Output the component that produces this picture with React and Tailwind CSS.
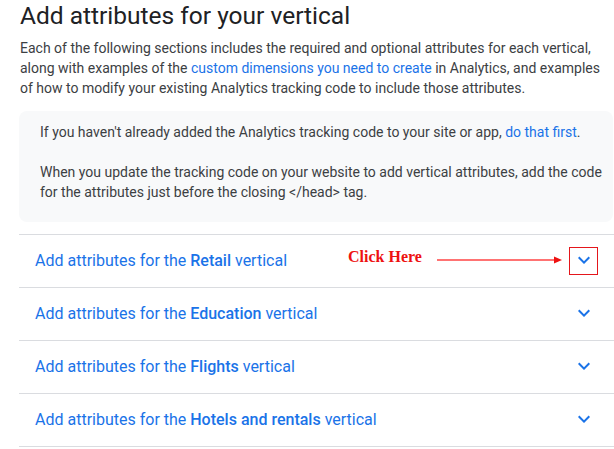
import React from "react";

function Chevron() {
  return (
    <svg width="24" height="24" viewBox="0 0 24 24" fill="#1a73e8">
      <path d="M16.59 8.59L12 13.17 7.41 8.59 6 10l6 6 6-6z" />
    </svg>
  );
}

const rows = ["Retail", "Education", "Flights", "Hotels and rentals"];

export default function App() {
  return (
    <div className="w-[614px] h-[449px] overflow-hidden bg-white" style={{ fontFamily: "Roboto, 'Liberation Sans', sans-serif" }}>
      <h2 className="pl-[20px] pt-[0px] text-[24.5px] leading-[32px] text-[#202124] font-normal">Add attributes for your vertical</h2>
      <p className="pl-[20px] mt-[6px] w-[600px] text-[14px] leading-[20px] text-[#3c4043]">
        Each of the following sections includes the required and optional attributes for each vertical, along with examples of the{" "}
        <span className="text-[#1a73e8]">custom dimensions you need to create</span> in Analytics, and examples of how to modify your existing Analytics tracking code to include those attributes.
      </p>
      <div className="ml-[19px] w-[594px] mt-[13px] bg-[#f8f9fa] rounded-[8px] pl-[21px] pr-[8px] pt-[11px] pb-[20px] text-[14px] leading-[20px] text-[#3c4043]">
        <p>
          If you haven't already added the Analytics tracking code to your site or app,{" "}
          <span className="text-[#1a73e8]">do that first</span>.
        </p>
        <p className="mt-[20px]">
          When you update the tracking code on your website to add vertical attributes, add the code for the attributes just before the closing &lt;/head&gt; tag.
        </p>
      </div>
      <div className="ml-[19px] w-[595px] mt-[12px] border-b border-[#dadce0]">
        {rows.map((r, i) => (
          <div key={r} className="relative flex items-center justify-between h-[53px] border-t border-[#dadce0] pl-[16px] pr-[18px]">
            <span className="text-[16px] text-[#1a73e8]">
              Add attributes for the <span className="font-medium">{r}</span> vertical
            </span>
            <div className="relative w-[24px] h-[24px] -mt-[3px]">
              <Chevron />
              {i === 0 && (
                <div className="absolute left-[-3px] top-[-1px] w-[29px] h-[28px] border border-[#e4161b]" />
              )}
            </div>
            {i === 0 && (
              <>
                <span
                  className="absolute left-[329px] top-[10px] text-[16px] font-bold text-[#ee1111]"
                  style={{ fontFamily: "'Liberation Serif', serif" }}
                >
                  Click Here
                </span>
                <svg className="absolute left-[418px] top-[21px]" width="126" height="8" viewBox="0 0 126 8">
                  <line x1="0" y1="4" x2="118" y2="4" stroke="#ff7373" strokeWidth="2" />
                  <polygon points="117,0.5 125,4 117,7.5" fill="#ee1111" />
                </svg>
              </>
            )}
          </div>
        ))}
      </div>
    </div>
  );
}
